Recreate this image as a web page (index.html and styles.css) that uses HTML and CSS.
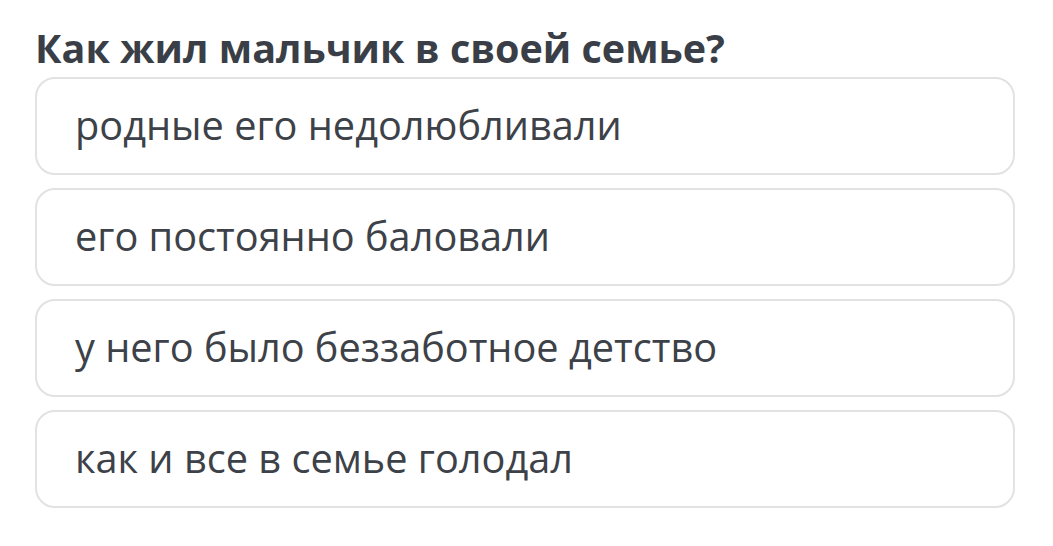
FILE: index.html
```html
<!DOCTYPE html>
<html lang="ru">
<head>
<meta charset="utf-8">
<link rel="stylesheet" href="styles.css">
</head>
<body>
<div class="quiz">
  <h1 class="question">Как жил мальчик в своей семье?</h1>
  <div class="options">
    <div class="option">родные его недолюбливали</div>
    <div class="option">его постоянно баловали</div>
    <div class="option">у него было беззаботное детство</div>
    <div class="option">как и все в семье голодал</div>
  </div>
</div>
</body>
</html>
```
FILE: styles.css
```css
html, body {
  margin: 0;
  padding: 0;
  background: #ffffff;
}
.quiz {
  width: 980px;
  padding: 23px 0 0 35px;
  font-family: "Open Sans", "Noto Sans", sans-serif;
}
.question {
  margin: 0 0 4px 0;
  font-size: 39.5px;
  line-height: 50px;
  font-weight: 700;
  color: #3a3f47;
}
.options {
  display: flex;
  flex-direction: column;
  gap: 13px;
}
.option {
  box-sizing: border-box;
  height: 98px;
  border: 2px solid #e2e2e2;
  border-radius: 20px;
  display: flex;
  align-items: center;
  padding-left: 38px;
  padding-bottom: 2px;
  font-size: 39.7px;
  color: #3d4148;
}
```
